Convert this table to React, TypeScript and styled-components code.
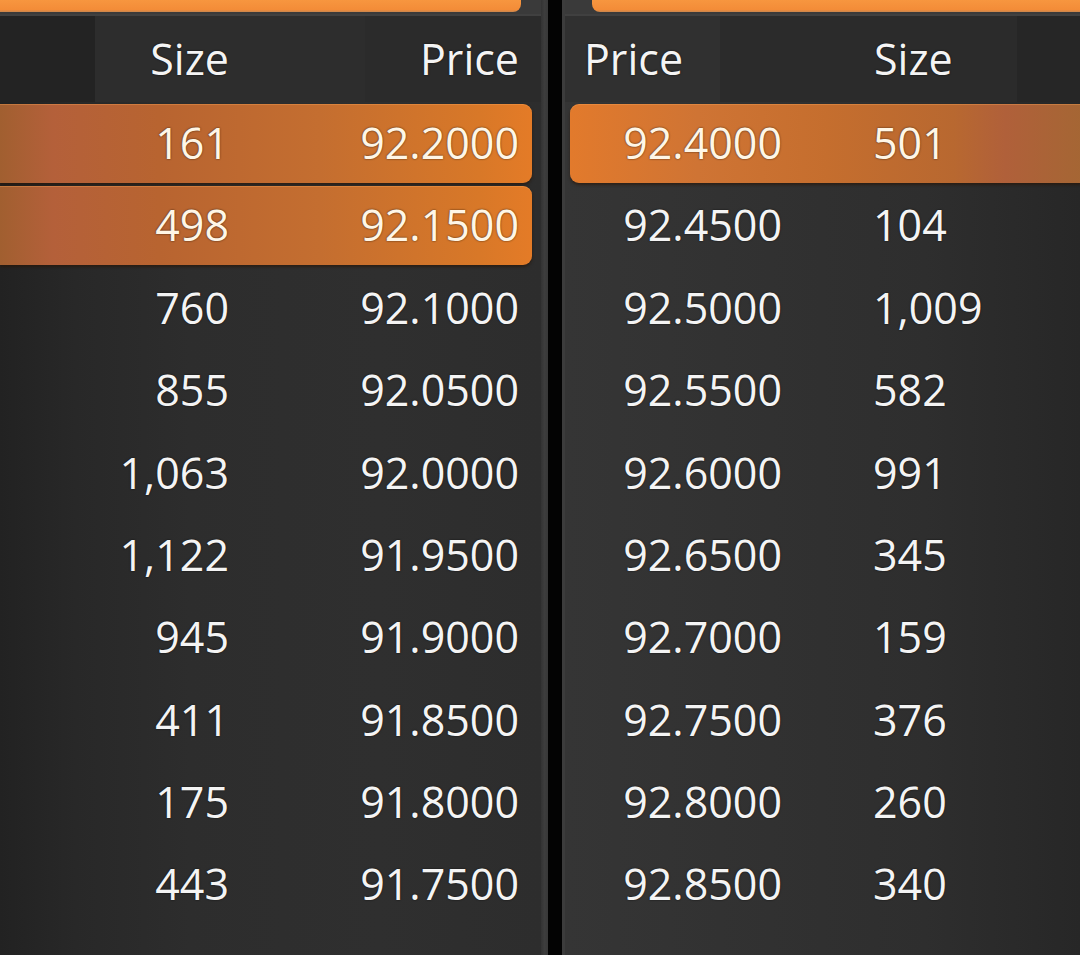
import React from "react";
import styled, { createGlobalStyle } from "styled-components";

const Global = createGlobalStyle`
  html, body { margin: 0; padding: 0; background: #2b2b2b; }
  body { width: 1080px; height: 955px; overflow: hidden; font-family: "Open Sans", "Noto Sans", sans-serif; }
  #root { width: 1080px; height: 955px; }
`;

const Page = styled.div`
  display: flex;
  width: 1080px;
  height: 955px;
  overflow: hidden;
  background: #2b2b2b;
`;

const Panel = styled.div<{ $side: "bid" | "ask" }>`
  display: flex;
  flex-direction: column;
  width: ${(p) => (p.$side === "bid" ? "541px" : "auto")};
  flex: ${(p) => (p.$side === "bid" ? "0 0 541px" : "1 1 auto")};
  overflow: hidden;
  background: ${(p) =>
    p.$side === "bid"
      ? "linear-gradient(90deg, #222 0%, #282828 14%, #2d2d2d 35%, #2f2f2f 70%, #2d2d2d 100%)"
      : "linear-gradient(90deg, #353535 0%, #323232 30%, #2e2e2e 70%, #272727 100%)"};
`;

const TopBarWrap = styled.div<{ $side: "bid" | "ask" }>`
  height: 16px;
  flex: 0 0 16px;
  display: flex;
  justify-content: ${(p) => (p.$side === "bid" ? "flex-start" : "flex-end")};
  border-bottom: 2px solid #404040;
  box-sizing: border-box;
  background: #3a3a3a;
`;

const TopBar = styled.div<{ $side: "bid" | "ask" }>`
  height: 12px;
  width: ${(p) => (p.$side === "bid" ? "521px" : "calc(100% - 27px)")};
  background: linear-gradient(180deg, #f7963f 0%, #f38c38 80%, #c8864e 100%);
  border-radius: ${(p) => (p.$side === "bid" ? "0 0 8px 0" : "0 0 0 8px")};
`;

const HeaderRow = styled.div<{ $side: "bid" | "ask" }>`
  height: 86px;
  flex: 0 0 86px;
  display: grid;
  align-items: center;
  color: #f4f4f4;
  font-size: 43px;
  text-shadow: 0 0 2px rgba(0, 0, 0, 0.8);
  grid-template-columns: ${(p) => (p.$side === "bid" ? "229px 290px" : "290px 200px")};
  padding-left: ${(p) => (p.$side === "bid" ? "0" : "19px")};
  background: ${(p) =>
    p.$side === "bid"
      ? "linear-gradient(90deg, #232323 0 95px, #2d2d2d 95px 365px, #2b2b2b 365px)"
      : "linear-gradient(90deg, #303030 0 155px, #2b2b2b 155px 452px, #262626 452px)"};
`;

const HeadCell = styled.span<{ $align: "left" | "right" }>`
  text-align: ${(p) => p.$align};
  line-height: 1;
  padding-bottom: 2px;
`;

const Rows = styled.div`
  display: flex;
  flex-direction: column;
`;

const Row = styled.div`
  height: 82.4px;
  flex: 0 0 82.4px;
  padding: 2px 0 1.5px;
  box-sizing: border-box;
  display: flex;
`;

const Bar = styled.div<{ $side: "bid" | "ask"; $hot: boolean }>`
  flex: 1;
  display: grid;
  align-items: center;
  font-size: 43px;
  color: ${(p) => (p.$hot ? "#fff6e6" : "#f4f4f4")};
  text-shadow: 0 0 2px rgba(0, 0, 0, 0.75);
  grid-template-columns: ${(p) => (p.$side === "bid" ? "229px 290px" : "212px 300px")};
  margin-right: ${(p) => (p.$side === "bid" ? "9px" : "0")};
  margin-left: ${(p) => (p.$side === "ask" ? "5px" : "0")};
  border-radius: ${(p) => (p.$side === "bid" ? "0 9px 9px 0" : "9px 0 0 9px")};
  background: ${(p) =>
    !p.$hot
      ? "transparent"
      : p.$side === "bid"
      ? "linear-gradient(90deg, #a15f30 0%, #b4603a 10%, #b86430 30%, #c46e30 60%, #d87828 90%, #e47b27 100%)"
      : "linear-gradient(90deg, #e27a2c 0%, #cf7434 25%, #c56e2e 50%, #b86830 75%, #b0603a 85%, #a56634 100%)"};
  box-shadow: ${(p) =>
    p.$hot ? "0 2px 3px rgba(40, 20, 5, 0.6), inset 0 1px 0 rgba(255, 170, 90, 0.35)" : "none"};
`;

const Cell = styled.span<{ $align: "left" | "right"; $indent?: number }>`
  text-align: ${(p) => p.$align};
  line-height: 1;
  padding-bottom: 2px;
  padding-left: ${(p) => p.$indent ?? 0}px;
`;

const Divider = styled.div`
  flex: 0 0 24px;
  display: flex;
  background: #2e2e2e;
`;

const DivEdge = styled.div`
  width: 7px;
  background: linear-gradient(90deg, #333 0%, #3d3d3d 50%, #383838 100%);
`;

const DivCore = styled.div`
  width: 14px;
  background: #030303;
`;

const DivEdgeR = styled.div`
  width: 3px;
  background: #3c3c3c;
`;

const bids = [
  ["161", "92.2000", true],
  ["498", "92.1500", true],
  ["760", "92.1000", false],
  ["855", "92.0500", false],
  ["1,063", "92.0000", false],
  ["1,122", "91.9500", false],
  ["945", "91.9000", false],
  ["411", "91.8500", false],
  ["175", "91.8000", false],
  ["443", "91.7500", false],
  ["", "", false],
] as const;

const asks = [
  ["92.4000", "501", true],
  ["92.4500", "104", false],
  ["92.5000", "1,009", false],
  ["92.5500", "582", false],
  ["92.6000", "991", false],
  ["92.6500", "345", false],
  ["92.7000", "159", false],
  ["92.7500", "376", false],
  ["92.8000", "260", false],
  ["92.8500", "340", false],
  ["", "", false],
] as const;

export default function App() {
  return (
    <>
      <Global />
      <Page>
        <Panel $side="bid">
          <TopBarWrap $side="bid">
            <TopBar $side="bid" />
          </TopBarWrap>
          <HeaderRow $side="bid">
            <HeadCell $align="right">Size</HeadCell>
            <HeadCell $align="right">Price</HeadCell>
          </HeaderRow>
          <Rows>
            {bids.map(([size, price, hot], i) => (
              <Row key={i}>
                <Bar $side="bid" $hot={hot}>
                  <Cell $align="right">{size}</Cell>
                  <Cell $align="right">{price}</Cell>
                </Bar>
              </Row>
            ))}
          </Rows>
        </Panel>
        <Divider>
          <DivEdge />
          <DivCore />
          <DivEdgeR />
        </Divider>
        <Panel $side="ask">
          <TopBarWrap $side="ask">
            <TopBar $side="ask" />
          </TopBarWrap>
          <HeaderRow $side="ask">
            <HeadCell $align="left">Price</HeadCell>
            <HeadCell $align="left">Size</HeadCell>
          </HeaderRow>
          <Rows>
            {asks.map(([price, size, hot], i) => (
              <Row key={i}>
                <Bar $side="ask" $hot={hot}>
                  <Cell $align="right">{price}</Cell>
                  <Cell $align="left" $indent={91}>{size}</Cell>
                </Bar>
              </Row>
            ))}
          </Rows>
        </Panel>
      </Page>
    </>
  );
}
